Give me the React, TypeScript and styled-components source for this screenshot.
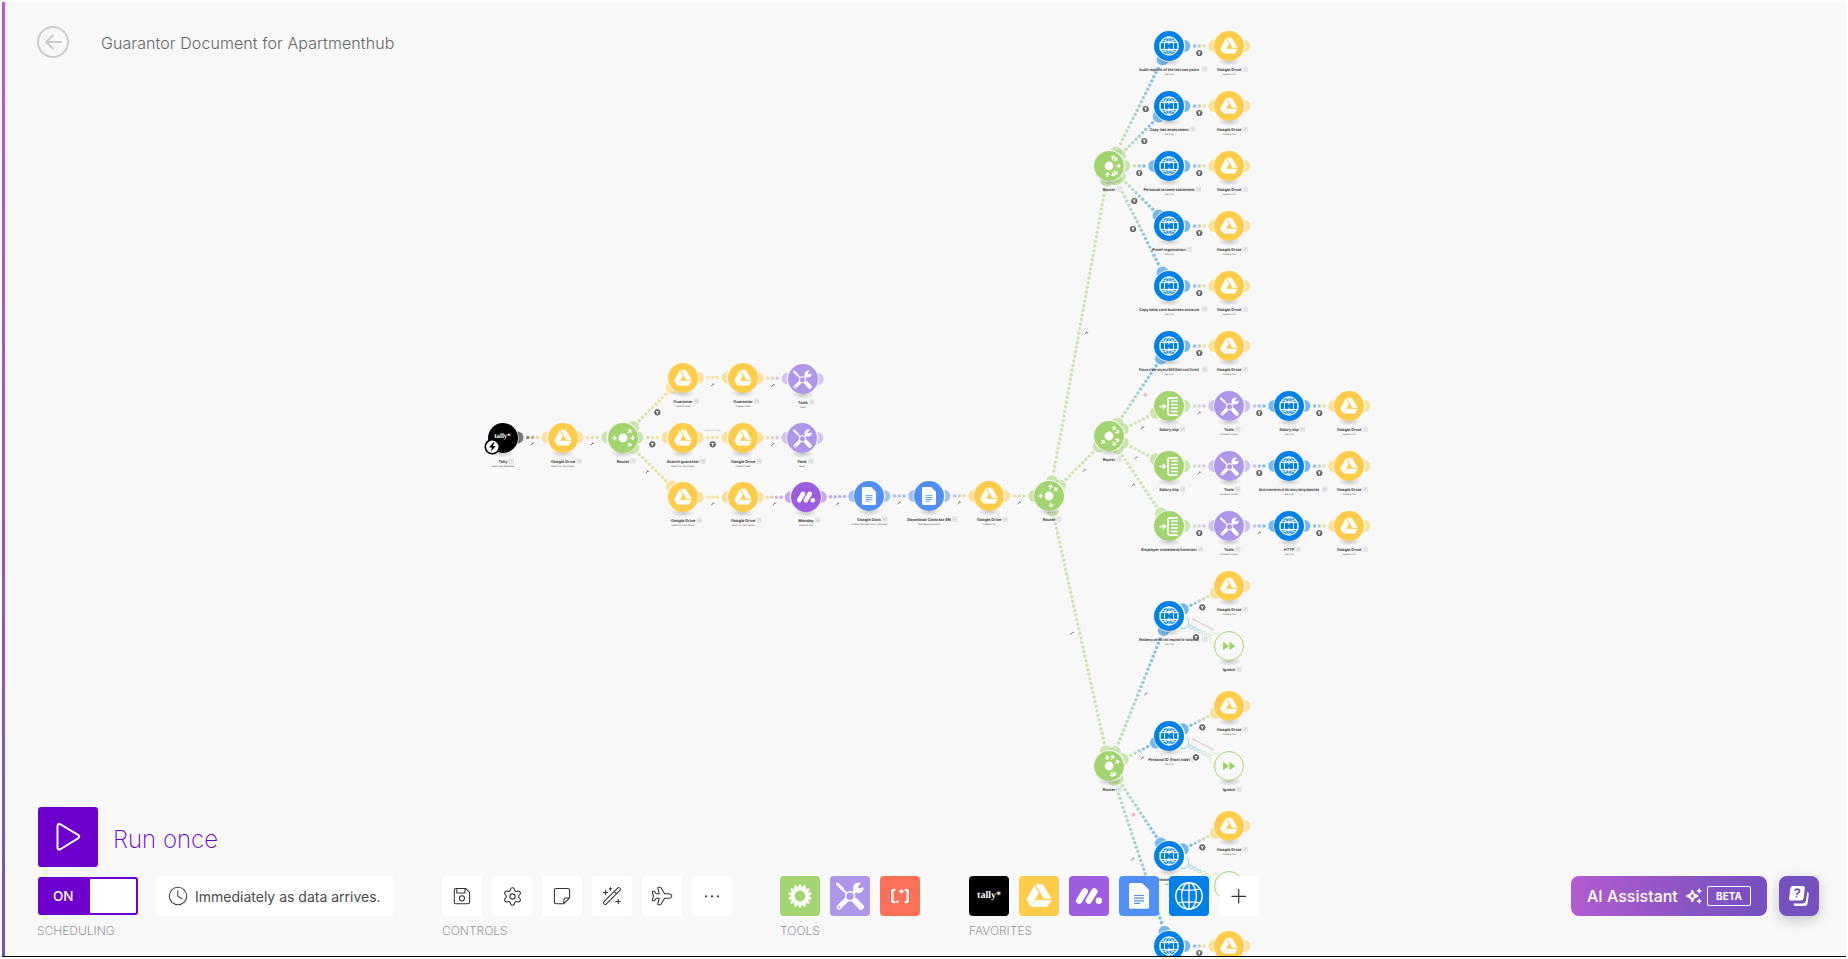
import React from "react";
import styled, { createGlobalStyle, css } from "styled-components";
import { Settings } from "lucide-react";

const GlobalStyle = createGlobalStyle`
  * { box-sizing: border-box; }
  body { margin: 0; background: #fff; font-family: Inter, "Liberation Sans", sans-serif; }
`;

/* ---------- palette ---------- */

type Kind = "tally" | "drive" | "router" | "tools" | "monday" | "docs" | "http" | "sheet" | "ignore";

const COLORS: Record<Kind, string> = {
  tally: "#000000",
  drive: "#ffcc4a",
  router: "#a2d56f",
  tools: "#ae96ea",
  monday: "#9c5de0",
  docs: "#508ff5",
  http: "#0080e8",
  sheet: "#a2d56f",
  ignore: "#a2d56f",
};

/* ---------- page frame ---------- */

const Screen = styled.main`
  display: grid;
  width: 1848px;
  height: 959px;
  overflow: hidden;
  background: #fff;
  & > * { grid-area: 1 / 1; min-width: 0; min-height: 0; }
`;

const Backdrop = styled.div`
  margin: 2px;
  background: linear-gradient(#b65cd0, #7550bf) left / 3px 100% no-repeat, #f8f8f8;
  border-bottom: 1px solid #000;
`;

const Canvas = styled.section`
  position: relative;
  height: 956px;
  overflow: hidden;
`;

const Overlay = styled.div`
  display: flex;
  flex-direction: column;
  justify-content: space-between;
  position: relative;
  padding: 26px 29px 20px 37px;
`;

/* ---------- header ---------- */

const Header = styled.header`
  display: flex;
  align-items: center;
  gap: 32px;
  height: 32px;
`;

const BackButton = styled.button`
  display: flex;
  width: 32px;
  height: 32px;
  padding: 0;
  border: 0;
  background: none;
`;

const Title = styled.h1`
  margin: 2px 0 0;
  font-size: 16px;
  font-weight: 300;
  letter-spacing: 0.08px;
  color: #666;
`;

/* ---------- bottom dock ---------- */

const Footer = styled.footer`
  display: flex;
  flex-direction: column;
`;

const RunRow = styled.div`
  display: flex;
  align-items: center;
  gap: 15px;
  height: 60px;
  margin: 0 0 9px 1px;
`;

const RunButton = styled.button`
  width: 60px;
  height: 60px;
  padding: 0;
  border: 0;
  border-radius: 3px;
  background: #6d00cc;
`;

const RunLabel = styled.span`
  padding-top: 5px;
  font-size: 24px;
  font-weight: 200;
  color: #6d00cc;
`;

const Dock = styled.div`
  display: flex;
  align-items: flex-start;
`;

const Group = styled.div<{ $width: number }>`
  flex: none;
  width: ${(p) => p.$width}px;
`;

const Tiles = styled.div<{ $gap?: number; $inset?: number }>`
  display: flex;
  align-items: center;
  gap: ${(p) => p.$gap ?? 10}px;
  padding-left: ${(p) => p.$inset ?? 0}px;
  height: 40px;
`;

const GroupLabel = styled.div`
  margin-top: 6px;
  height: 17px;
  line-height: 17px;
  font-size: 12px;
  font-weight: 300;
  color: #999;
`;

const Toggle = styled.button`
  display: flex;
  align-items: center;
  justify-content: space-between;
  width: 100px;
  height: 38px;
  padding: 2px 2px 2px 15px;
  border: 0;
  border-radius: 3px;
  background: #6d00cc;
  color: #fff;
  font: 500 13.5px Inter, sans-serif;
`;

const Knob = styled.span`
  width: 46px;
  height: 34px;
  border-radius: 1px;
  background: #fff;
`;

const Schedule = styled.div`
  display: flex;
  align-items: center;
  gap: 7px;
  width: 237px;
  height: 40px;
  padding-left: 12px;
  border-radius: 4px;
  background: #fff;
  color: #4a4a4a;
  font-size: 14px;
  white-space: nowrap;
`;

const Tile = styled.button<{ $color?: string }>`
  display: flex;
  flex: none;
  width: 40px;
  height: 40px;
  padding: 0;
  border: 0;
  border-radius: 4px;
  background: ${(p) => p.$color ?? "#fff"};
`;

const Assist = styled.div`
  display: flex;
  gap: 12px;
  margin-left: auto;
`;

const AssistantButton = styled.button`
  display: flex;
  align-items: center;
  width: 196px;
  height: 40px;
  padding: 0 0 0 16px;
  border: 0;
  border-radius: 8px;
  background: linear-gradient(100deg, #b25ccf, #7550bf 95%);
  color: #fff;
  font: 500 16px Inter, sans-serif;
  text-align: left;
  white-space: nowrap;
`;

const AssistantText = styled.span`
  width: 97px;
`;

const Beta = styled.span`
  display: flex;
  align-items: center;
  justify-content: center;
  width: 44px;
  height: 20px;
  margin-left: 3px;
  border: 1px solid #fff;
  border-radius: 2px;
  font-size: 10px;
  font-weight: 700;
`;

const HelpButton = styled.button`
  width: 40px;
  height: 40px;
  padding: 0;
  border: 0;
  border-radius: 8px;
  background: #7550bf;
  box-shadow: 0 4px 14px rgba(0, 0, 0, 0.2);
`;

/* ---------- diagram parts ---------- */

const Wires = styled.svg`
  position: absolute;
  inset: 0;
`;

const NodeBox = styled.div<{ $x: number; $y: number }>`
  position: absolute;
  left: ${(p) => p.$x - 40}px;
  top: ${(p) => p.$y - 15}px;
  width: 80px;
  display: flex;
  flex-direction: column;
  align-items: center;
`;

const Disc = styled.div<{ $kind: Kind }>`
  display: flex;
  align-items: center;
  justify-content: center;
  width: 30px;
  height: 30px;
  border-radius: 50%;
  background: ${(p) => COLORS[p.$kind]};
  ${(p) =>
    p.$kind === "ignore" &&
    css`
      background: #f8f8f8;
      border: 1px solid #a2d56f;
    `}
`;

const Caption = styled.svg`
  display: block;
  overflow: visible;
  font-family: Inter, sans-serif;
  text-rendering: geometricPrecision;
`;

/* ---------- icons (40 unit grid) ---------- */

const Icon = ({ size = 40, children }: { size?: number; children: React.ReactNode }) => (
  <svg width={size} height={size} viewBox="0 0 40 40" fill="none">
    {children}
  </svg>
);

const DriveMark = ({ size }: { size?: number }) => (
  <Icon size={size}>
    <g fill="#fff" stroke="#fff" strokeWidth=".7" strokeLinejoin="round">
      <path d="M15.4 9.6 19.5 17 11.8 30.2 7.9 23.6Z" />
      <path d="M17 8.6H23.7L31.8 22.2H24.7Z" />
      <path d="M16.5 24.3H31.9L28.3 30.5H12.9Z" />
    </g>
  </Icon>
);

const MondayMark = ({ size }: { size?: number }) => (
  <Icon size={size}>
    <path d="M10.2 24.6 15.8 15.4M19.8 24.6 25.4 15.4" stroke="#fff" strokeWidth="6.4" strokeLinecap="round" />
    <circle cx="29.8" cy="24.7" r="3.2" fill="#fff" />
  </Icon>
);

const DocsMark = ({ size }: { size?: number }) => (
  <Icon size={size}>
    <path d="M11.5 7H23L30 14V31.2Q30 32.7 28.5 32.7H11.5Q10 32.7 10 31.2V8.5Q10 7 11.5 7Z" fill="#fff" />
    <path d="M15 19.5H25M15 22.2H25M15 24.9H25M15 27.4H21" stroke="#508ff5" strokeWidth="1.2" />
  </Icon>
);

const GlobeMark = ({ size, compact }: { size?: number; compact?: boolean }) => (
  <Icon size={size}>
    {compact ? (
      <g stroke="#fff" strokeWidth="1.6">
        <circle cx="20" cy="20" r="13" />
        <path d="M20 7V14.5M20 25.5V33M14 14.5Q15.5 9.5 20 7.4 24.5 9.5 26 14.5M14 25.5Q15.5 30.5 20 32.6 24.5 30.5 26 25.5M10.5 12.2Q20 15 29.5 12.2M10.5 27.8Q20 25 29.5 27.8" strokeWidth="1.3" />
        <rect x="7.4" y="15" width="25.2" height="10" fill="#0080e8" strokeWidth="1.6" />
        <path d="M13.6 15V25M20 15V17.8M20 22.2V25M26.4 15V25" strokeWidth="1.5" />
      </g>
    ) : (
      <g stroke="#fff" strokeWidth="1.3">
        <circle cx="20" cy="20" r="13.2" strokeWidth="1.5" />
        <ellipse cx="20" cy="20" rx="7.4" ry="13.2" />
        <path d="M20 6.8V33.2M8.8 13.2Q20 15.4 31.2 13.2M8.8 26.8Q20 24.8 31.2 26.8" />
      </g>
    )}
  </Icon>
);

const ToolsMark = ({ size }: { size?: number }) => (
  <Icon size={size}>
    <g stroke="#fff" strokeLinecap="round">
      <path d="M7.3 8.3 16 16.6" strokeWidth="1.8" />
      <path d="M7.4 8 12.5 13" strokeWidth="2.8" />
      <path d="M25.3 25 30.8 30.8" strokeWidth="6" />
      <path d="M9.2 31 15.8 24.4" strokeWidth="5" />
      <path d="M23.7 16.3 27 13" strokeWidth="3.6" strokeLinecap="butt" />
      <path d="M29.8 7.4A4.6 4.6 0 1 0 33 11.9L29.3 13.2 26.6 10.8Z" fill="#fff" strokeWidth="1.4" strokeLinejoin="round" />
    </g>
    <circle cx="20" cy="20.3" r="4.5" stroke="#fff" strokeWidth="1.6" fill="#ae96ea" />
    <circle cx="9.4" cy="31" r="1.1" fill="#ae96ea" />
  </Icon>
);

const GearMark = () => (
  <Icon>
    <circle cx="20" cy="20" r="7.4" stroke="#fff" strokeWidth="4" />
    {Array.from({ length: 14 }, (_, i) => (
      <path
        key={i}
        d="M18.3 11.5 19 8.3H21L21.7 11.5Z"
        fill="#fff"
        transform={`rotate(${(i * 360) / 14} 20 20)`}
      />
    ))}
  </Icon>
);

const ParserMark = () => (
  <Icon>
    <path d="M15.4 13.9H14Q12.3 13.9 12.3 15.6V24.6Q12.3 26.2 14 26.2H15.4M24.6 13.9H26Q27.7 13.9 27.7 15.6V24.6Q27.7 26.2 26 26.2H24.6" stroke="#fff" strokeWidth="2.3" />
    <circle cx="17.5" cy="25.8" r="1.3" fill="#fff" />
    <path d="M21.5 13.2V17.4M19.5 14.7 23.5 15.9M23.5 14.7 19.5 15.9" stroke="#fff" strokeWidth="1.2" />
  </Icon>
);

const TallyText = styled.span<{ $size: number }>`
  margin: auto;
  color: #fff;
  font: 700 ${(p) => p.$size}px "Liberation Serif", serif;
  line-height: 1;
  text-rendering: geometricPrecision;
`;

const SheetMark = ({ size }: { size?: number }) => (
  <Icon size={size}>
    <path d="M6 20H14M10.8 16.4 14.6 20 10.8 23.6" stroke="#fff" strokeWidth="1.8" />
    <path d="M31.5 8H21Q18 8 18 11V29Q18 32 21 32H31.5" stroke="#fff" strokeWidth="2.4" />
    <path d="M22 12.5H31.5M22 17.2H31.5M22 22H31.5M22 26.8H31.5" stroke="#fff" strokeWidth="2" />
  </Icon>
);

const IgnoreMark = () => (
  <Icon size={28}>
    <path d="M11.5 14 20 20 11.5 26ZM20.5 14 29 20 20.5 26Z" fill="#9bd063" />
  </Icon>
);

const RouterMark = ({ arrows }: { arrows: [number, boolean][] }) => (
  <svg width="30" height="30" viewBox="-15 -15 30 30">
    <circle r="4.4" fill="#fff" />
    {arrows.map(([angle, inward], i) => (
      <g key={i} transform={`rotate(${angle}) translate(9 0) scale(${inward ? -1 : 1} 1)`}>
        <path d="M-2.3 0H1.8M0 -2 2 0 0 2" fill="none" stroke="#fff" strokeWidth="1.2" />
      </g>
    ))}
  </svg>
);

const line = { stroke: "#333", strokeWidth: 1.05, strokeLinecap: "round", strokeLinejoin: "round" } as const;

const SaveIcon = () => (
  <Icon>
    <path {...line} d="M13.8 12.4H23.6L27.6 16.4V26.2Q27.6 27.7 26.1 27.7H13.8Q12.3 27.7 12.3 26.2V13.9Q12.3 12.4 13.8 12.4ZM14.8 12.6V16.9H23V12.6" />
    <circle {...line} cx="19.9" cy="22.3" r="2.6" />
  </Icon>
);

const NoteIcon = () => (
  <Icon>
    <path {...line} d="M13.9 12.4H26.1Q27.6 12.4 27.6 13.9V21.9L21.9 27.7H13.9Q12.4 27.7 12.4 26.2V13.9Q12.4 12.4 13.9 12.4ZM27.4 21.9H23.4Q21.9 21.9 21.9 23.4V27.5" />
  </Icon>
);

const WandIcon = () => (
  <Icon>
    <path {...line} d="M11.8 25.9 25.9 11.8Q26.7 11.1 27.5 11.8L28.2 12.5Q28.9 13.3 28.2 14.1L14.1 28.2Q13.3 28.9 12.5 28.2L11.8 27.5Q11.1 26.7 11.8 25.9ZM22.2 15.5 24.5 17.8M13.6 14.3V18.7M11.4 16.5H15.8M18.4 11.6V14M17.2 12.8H19.6M26.2 23.2V27.6M24 25.4H28.4" />
  </Icon>
);

const PlaneIcon = () => (
  <Icon>
    <path {...line} d="M29.8 20C29.8 18.6 27.5 17.7 25.8 17.7H22.6L19 11.7Q18.7 11.3 18.2 11.3H16.3Q15.6 11.3 15.8 12L17.2 17.7H14.2L12.6 15.6Q12.4 15.3 12 15.3H10.7Q10.1 15.3 10.3 15.9L11.5 20 10.3 24.1Q10.1 24.7 10.7 24.7H12Q12.4 24.7 12.6 24.4L14.2 22.3H17.2L15.8 28Q15.6 28.7 16.3 28.7H18.2Q18.7 28.7 19 28.3L22.6 22.3H25.8C27.5 22.3 29.8 21.4 29.8 20Z" />
  </Icon>
);

const MoreIcon = () => (
  <Icon>
    {[14, 20, 26].map((x) => (
      <circle key={x} cx={x} cy="20.3" r="1.1" fill="#333" />
    ))}
  </Icon>
);

const CenteredSettings = styled(Settings)`
  margin: auto;
  color: #333;
`;

/* ---------- scenario data ---------- */

interface FlowNode {
  id: string;
  kind: Kind;
  x: number;
  y: number;
  name: string;
  /** drawn width of the name in pixels */
  w: number;
  sub?: string;
  n?: number;
  tail?: boolean;
}

const UP = "Upload a File";
const GET = "Get a file";
const FIND = "Search for Files/Folders";

const nodes: FlowNode[] = [
  { id: "tally", kind: "tally", x: 502.5, y: 437.5, name: "Tally", w: 9, sub: "Watch New Responses", n: 1 },
  { id: "d0", kind: "drive", x: 562.5, y: 437.5, name: "Google Drive", w: 24.7, sub: FIND, n: 26 },
  { id: "r0", kind: "router", x: 622.5, y: 437.5, name: "Router", w: 12.5, n: 31 },
  { id: "g1", kind: "drive", x: 682.5, y: 377.5, name: "Guarantor", w: 19.3, sub: "Create a Folder", n: 32 },
  { id: "g2", kind: "drive", x: 742.5, y: 377.5, name: "Guarantor", w: 19.3, sub: "Create a Folder", n: 33 },
  { id: "t1", kind: "tools", x: 802.7, y: 379, name: "Tools", w: 9.8, sub: "Sleep", n: 38, tail: true },
  { id: "s1", kind: "drive", x: 682.5, y: 437.5, name: "Search guarantor", w: 32.3, sub: FIND, n: 34 },
  { id: "s2", kind: "drive", x: 742.5, y: 437.5, name: "Google Drive", w: 24.7, sub: "Create a Folder", n: 35 },
  { id: "t2", kind: "tools", x: 802.3, y: 438, name: "Tools", w: 9.8, sub: "Sleep", n: 39, tail: true },
  { id: "l1", kind: "drive", x: 682.5, y: 497.3, name: "Google Drive", w: 24.7, sub: FIND, n: 36 },
  { id: "l2", kind: "drive", x: 742.5, y: 497.3, name: "Google Drive", w: 24.7, sub: FIND, n: 37 },
  { id: "mon", kind: "monday", x: 805.8, y: 497.3, name: "Monday", w: 15.4, sub: "Create an Item", n: 24 },
  { id: "doc1", kind: "docs", x: 869.3, y: 496, name: "Google Docs", w: 24, sub: "Create a Document from a Template", n: 40 },
  { id: "doc2", kind: "docs", x: 929.3, y: 496, name: "Download Contract EN", w: 43.7, sub: "Download a Document", n: 41 },
  { id: "l3", kind: "drive", x: 989.3, y: 496, name: "Google Drive", w: 24.7, sub: UP, n: 42 },
  { id: "rm", kind: "router", x: 1049.3, y: 496, name: "Router", w: 12.5, n: 7 },
  { id: "ra", kind: "router", x: 1109.3, y: 166, name: "Router", w: 12.5, n: 8 },
  { id: "rb", kind: "router", x: 1109.3, y: 436, name: "Router", w: 12.5, n: 9 },
  { id: "rc", kind: "router", x: 1109.3, y: 766, name: "Router", w: 12.5, n: 10 },
];

type Link = [string, string];

const links: Link[] = [
  ["tally", "d0"], ["d0", "r0"], ["r0", "g1"], ["g1", "g2"], ["g2", "t1"],
  ["r0", "s1"], ["s1", "s2"], ["s2", "t2"], ["r0", "l1"], ["l1", "l2"], ["l2", "mon"],
  ["mon", "doc1"], ["doc1", "doc2"], ["doc2", "l3"], ["l3", "rm"],
  ["rm", "ra"], ["rm", "rb"], ["rm", "rc"],
];

const drive = (id: string, x: number, y: number) =>
  nodes.push({ id, kind: "drive", x, y, name: "Google Drive", w: 24.7, sub: UP, n: 12, tail: true });

const requests: [string, number, number, string][] = [
  ["Audit reports of the last two years", 46, 60, "ra"],
  ["Copy last assessment", 106, 39, "ra"],
  ["Personal income statement", 166, 51, "ra"],
  ["Proof registration", 226, 33.3, "ra"],
  ["Copy bank card business account", 286, 60, "ra"],
  ["Picture of pre-physical BKR/Debit card (fronts)", 346, 60, "rb"],
  ["HTTP", 946, 10.3, "rc"],
];
requests.forEach(([name, y, w, router], i) => {
  nodes.push({ id: `h${i}`, kind: "http", x: 1169.3, y, name, sub: GET, n: 14 + i, w });
  drive(`hd${i}`, 1229.3, y);
  links.push([router, `h${i}`], [`h${i}`, `hd${i}`]);
});

const slips: [string, number, string, number, number][] = [
  ["Salary slip", 19.5, "Salary slip", 19.5, 406],
  ["Salary slip", 19.5, "Bank statements of the salary being deposited", 60, 466],
  ["Employer statement/contract", 55.5, "HTTP", 10.3, 526],
];
slips.forEach(([first, w1, second, w2, y], i) => {
  nodes.push({ id: `p${i}`, kind: "sheet", x: 1169.3, y, name: first, w: w1, n: 43 + i });
  nodes.push({ id: `pt${i}`, kind: "tools", x: 1229.3, y, name: "Tools", w: 9.8, sub: "Increment function", n: 53 });
  nodes.push({ id: `ph${i}`, kind: "http", x: 1289.3, y, name: second, w: w2, sub: GET, n: 63 });
  drive(`pd${i}`, 1349.3, y);
  links.push(["rb", `p${i}`], [`p${i}`, `pt${i}`], [`pt${i}`, `ph${i}`], [`ph${i}`, `pd${i}`]);
});

const permits: [string, number, number][] = [
  ["Residency permit (not required for nationals)", 616, 60],
  ["Personal ID (front side)", 736, 41.7],
  ["Automated request", 856, 37],
];
permits.forEach(([name, y, w], i) => {
  nodes.push({ id: `q${i}`, kind: "http", x: 1169.3, y, name, sub: GET, n: 71 + i, w });
  drive(`qd${i}`, 1229.3, y - 30);
  nodes.push({ id: `qi${i}`, kind: "ignore", x: 1229.3, y: y + 30, name: "Ignore", w: 12.5, n: 81 });
  links.push(["rc", `q${i}`], [`q${i}`, `qd${i}`], [`q${i}`, `qi${i}`]);
});

const byId = Object.fromEntries(nodes.map((n) => [n.id, n]));

const funnels: [number, number][] = [
  [657.3, 412.3], [652.3, 444.3], [712.7, 444.3],
  [1199.3, 53], [1199.3, 113], [1199.3, 173], [1199.3, 233], [1199.3, 293], [1199.3, 353],
  [1145.7, 109], [1144.3, 141], [1139.3, 173], [1134.3, 201], [1133, 229],
  [1199.3, 533], [1259.3, 413], [1259.3, 473], [1319.3, 413], [1319.3, 473], [1319.3, 533],
  [1202.3, 607.3], [1196, 637.3], [1202.3, 727.3], [1196, 757.3], [1202.3, 847.3], [1199.3, 953],
];

const wrenches: [number, number][] = [
  [712.7, 384.7], [772.7, 385.3], [532.3, 443.7], [592.3, 443.7], [772.7, 444.3], [647.3, 471.7],
  [712.7, 503.7], [774.3, 503.7], [837.7, 503.7], [899.3, 502.7], [959.3, 502.7], [1019.3, 502.7],
  [1086.3, 332.7], [1142.3, 427.7], [1136, 457.7], [1133.3, 484.7], [1084.3, 470.3],
  [1199.3, 412.8], [1199.3, 472.7], [1259.3, 532.8], [1146, 693.7], [1142.3, 757.7], [1132.7, 859],
  [1072, 633],
];

const disabled: [number, number][] = [[1145.3, 394.7], [1133.3, 814.7]];

/* ---------- wiring ---------- */

const mix = (a: string, b: string, t: number) => {
  const channel = (hex: string, i: number) => parseInt(hex.slice(1 + i * 2, 3 + i * 2), 16);
  return `rgb(${[0, 1, 2].map((i) => Math.round(channel(a, i) * (1 - t) + channel(b, i) * t)).join(",")})`;
};

const STEP = 4.67;

const Wire = ({ from, to }: { from: FlowNode; to: FlowNode }) => {
  const dx = to.x - from.x;
  const dy = to.y - from.y;
  const d = Math.hypot(dx, dy);
  const ux = dx / d;
  const uy = dy / d;
  const count = Math.floor((d - 47) / STEP) + 1;
  const start = (d - (count - 1) * STEP) / 2;
  const hollow = to.kind === "ignore";
  const a = COLORS[from.kind];
  const b = COLORS[to.kind];
  const paint = (c: string) =>
    hollow ? { fill: "#f8f8f8", stroke: c, strokeWidth: 0.7 } : { fill: c };
  return (
    <g opacity={0.52}>
      <circle cx={from.x + ux * 15} cy={from.y + uy * 15} r={6} {...paint(a)} />
      <circle cx={to.x - ux * 15} cy={to.y - uy * 15} r={6} {...paint(b)} />
      {Array.from({ length: count }, (_, i) => {
        const s = start + i * STEP;
        const t = count > 1 ? 0.1 + (0.8 * i) / (count - 1) : 0.5;
        return <circle key={i} cx={from.x + ux * s} cy={from.y + uy * s} r={1.7} {...paint(mix(a, b, t))} />;
      })}
    </g>
  );
};

const Wiring = () => (
  <Wires width="1848" height="956" viewBox="0 0 1848 956">
    <defs>
      <radialGradient id="shade">
        <stop offset="0" stopColor="#000" stopOpacity=".2" />
        <stop offset="1" stopColor="#000" stopOpacity="0" />
      </radialGradient>
    </defs>
    {nodes.filter((n) => n.tail).map((n) => (
      <circle key={n.id} cx={n.x + 15} cy={n.y} r="6" fill={COLORS[n.kind]} opacity=".52" />
    ))}
    {links.map(([a, b]) => (
      <Wire key={a + b} from={byId[a]} to={byId[b]} />
    ))}
    {nodes.map((n) => (
      <circle key={n.id} cx={n.x} cy={n.y} r="16" fill="#f8f8f8" />
    ))}
    {nodes.map((n) => (
      <ellipse key={n.id} cx={n.x} cy={n.y + 15.5} rx="12" ry="4.5" fill="url(#shade)" />
    ))}
  </Wires>
);

const Marks = () => (
  <Wires width="1848" height="956" viewBox="0 0 1848 956">
    {funnels.map(([x, y]) => (
      <g key={`${x}-${y}`} transform={`translate(${x} ${y})`}>
        <circle r="3.1" fill="#666" />
        <path d="M-1.6 -1.4H1.6L.5 .2V1.5L-.5 1.9V.2Z" fill="#fff" />
      </g>
    ))}
    {wrenches.map(([x, y]) => (
      <path
        key={`${x}-${y}`}
        transform={`translate(${x} ${y})`}
        d="M-1.6 1.6 .6 -.6M.2 -1.2 1 -.2 1.7 -.9"
        fill="none"
        stroke="#666"
        strokeWidth=".9"
      />
    ))}
    {disabled.map(([x, y]) => (
      <g key={x} transform={`translate(${x} ${y})`} stroke="#f08a94" strokeWidth=".8" fill="none">
        <circle r="1.4" />
        <path d="M-1 -1 1 1" />
      </g>
    ))}
    <g transform="translate(492.3 446.8)">
      <circle r="7" fill="#fff" stroke="#000" strokeWidth="1.6" />
      <path d="M1.2 -4.6 -3.2 .6H-.3L-1.4 4.6 3.4 -.8H.5L2.2 -4.6Z" fill="#000" />
    </g>
    <g fontFamily="Inter, sans-serif" fontSize="1.9" fill="#777" textAnchor="middle" textRendering="geometricPrecision">
      <text x="712.7" y="430.8">Search if it is full</text>
      {[624, 744].map((y) => (
        <text key={y} transform={`translate(1202.7 ${y + 1}) rotate(28)`}>
          File is not uploaded/empty
        </text>
      ))}
    </g>
  </Wires>
);

const routerArrows = (router: FlowNode): [number, boolean][] =>
  links
    .filter(([a, b]) => a === router.id || b === router.id)
    .map(([a, b]) => {
      const inward = b === router.id;
      const other = byId[inward ? a : b];
      return [(Math.atan2(other.y - router.y, other.x - router.x) * 180) / Math.PI, inward];
    });

const NodeMark = ({ node }: { node: FlowNode }) => {
  switch (node.kind) {
    case "tally":
      return <TallyText $size={6.9}>tally*</TallyText>;
    case "drive":
      return <DriveMark size={28} />;
    case "router":
      return <RouterMark arrows={routerArrows(node)} />;
    case "tools":
      return <ToolsMark size={27} />;
    case "monday":
      return <MondayMark size={28} />;
    case "docs":
      return <DocsMark size={28} />;
    case "http":
      return <GlobeMark size={28} compact />;
    case "sheet":
      return <SheetMark size={29} />;
    default:
      return <IgnoreMark />;
  }
};

const NodeCaption = ({ node }: { node: FlowNode }) => {
  const half = node.w / 2;
  const badge = half + (node.w >= 60 ? 3.6 : 1.6);
  return (
    <Caption width="80" height="16" viewBox="-40 0 80 16">
      <text
        x={-half}
        y="9.7"
        fontSize="3.9"
        fontWeight="700"
        fill="#3c3c3c"
        textLength={node.w}
        lengthAdjust="spacingAndGlyphs"
      >
        {node.name}
      </text>
      <rect x={badge} y="5.9" width="4.4" height="4.4" rx=".4" fill="#f0f0f0" stroke="#ccc" strokeWidth=".5" />
      <text x={badge + 2.2} y="8.9" fontSize="2" fill="#999" textAnchor="middle">
        {node.n}
      </text>
      {node.sub && (
        <text x="0" y="13.8" fontSize="2.1" fill="#555" textAnchor="middle">
          {node.sub}
        </text>
      )}
    </Caption>
  );
};

const Module = ({ node }: { node: FlowNode }) => (
  <NodeBox $x={node.x} $y={node.y}>
    <Disc $kind={node.kind}>
      <NodeMark node={node} />
    </Disc>
    {node.y < 930 && <NodeCaption node={node} />}
  </NodeBox>
);

/* ---------- app ---------- */

export default function App() {
  return (
    <>
      <GlobalStyle />
      <Screen>
        <Backdrop />
        <Canvas>
          <Wiring />
          {nodes.map((n) => (
            <Module key={n.id} node={n} />
          ))}
          <Marks />
        </Canvas>
        <Overlay>
          <Header>
            <BackButton aria-label="Back">
              <svg width="32" height="32" viewBox="0 0 32 32" fill="none" stroke="#ccc" strokeWidth="2">
                <circle cx="16" cy="16" r="15" />
                <path d="M24 16H9M15.8 9.5 9 16 15.8 22.5" strokeLinecap="round" strokeLinejoin="round" />
              </svg>
            </BackButton>
            <Title>Guarantor Document for Apartmenthub</Title>
          </Header>
          <Footer>
            <RunRow>
              <RunButton aria-label="Run once">
                <svg width="60" height="60" viewBox="0 0 60 60" fill="none">
                  <path d="M19.5 19.4Q19.5 15.8 22.8 17.5L40 27.8Q42.6 29.6 40 31.4L22.8 42Q19.5 43.7 19.5 40.2Z" stroke="#fff" strokeWidth="2" />
                </svg>
              </RunButton>
              <RunLabel>Run once</RunLabel>
            </RunRow>
            <Dock>
              <Group $width={405}>
                <Tiles $gap={18} $inset={1}>
                  <Toggle>
                    ON
                    <Knob />
                  </Toggle>
                  <Schedule>
                    <svg width="20" height="20" viewBox="0 0 20 20" fill="none" stroke="#444" strokeWidth="1.1">
                      <circle cx="10" cy="10" r="8.7" />
                      <path d="M9.8 4.6V10.2L14 12.8" />
                    </svg>
                    Immediately as data arrives.
                  </Schedule>
                </Tiles>
                <GroupLabel>SCHEDULING</GroupLabel>
              </Group>
              <Group $width={338}>
                <Tiles>
                  <Tile><SaveIcon /></Tile>
                  <Tile><CenteredSettings size={21} strokeWidth={1.2} /></Tile>
                  <Tile><NoteIcon /></Tile>
                  <Tile><WandIcon /></Tile>
                  <Tile><PlaneIcon /></Tile>
                  <Tile><MoreIcon /></Tile>
                </Tiles>
                <GroupLabel>CONTROLS</GroupLabel>
              </Group>
              <Group $width={189}>
                <Tiles>
                  <Tile $color={COLORS.router}><GearMark /></Tile>
                  <Tile $color={COLORS.tools}><ToolsMark /></Tile>
                  <Tile $color="#fc7059"><ParserMark /></Tile>
                </Tiles>
                <GroupLabel>TOOLS</GroupLabel>
              </Group>
              <Group $width={290}>
                <Tiles>
                  <Tile $color={COLORS.tally}><TallyText $size={10}>tally*</TallyText></Tile>
                  <Tile $color={COLORS.drive}><DriveMark /></Tile>
                  <Tile $color={COLORS.monday}><MondayMark /></Tile>
                  <Tile $color={COLORS.docs}><DocsMark /></Tile>
                  <Tile $color={COLORS.http}><GlobeMark /></Tile>
                  <Tile>
                    <Icon>
                      <path d="M12.5 20.3H27M19.7 13V27.5" stroke="#333" strokeWidth="1.2" />
                    </Icon>
                  </Tile>
                </Tiles>
                <GroupLabel>FAVORITES</GroupLabel>
              </Group>
              <Assist>
                <AssistantButton>
                  <AssistantText>AI Assistant</AssistantText>
                  <svg width="20" height="20" viewBox="0 0 20 20" fill="none">
                    <path d="M8.3 4.8 9.8 8.5 13.5 10 9.8 11.5 8.3 15.2 6.8 11.5 3.1 10 6.8 8.5Z" stroke="#fff" strokeWidth="1.9" strokeLinejoin="round" />
                    <path d="M15.2 1.8 16.1 4 18.3 4.9 16.1 5.8 15.2 8 14.3 5.8 12.1 4.9 14.3 4ZM15.2 12 16.1 14.2 18.3 15.1 16.1 16 15.2 18.2 14.3 16 12.1 15.1 14.3 14.2Z" fill="#fff" />
                  </svg>
                  <Beta>BETA</Beta>
                </AssistantButton>
                <HelpButton aria-label="Help">
                  <Icon>
                    <path d="M13.8 10H23.6Q26.2 10 25.8 12.6L24.6 22.2Q24.2 24.6 21.8 24.6H12.2Q9.8 24.6 10.2 22L11.4 12.2Q11.8 10 13.8 10Z" fill="#fff" />
                    <path d="M28.4 15.8Q30 16.4 29.8 18.4L28.6 27.4Q28.2 30 25.6 30H17Q14.6 30 14.6 27.4H23.6Q26.4 27.4 26.9 24.6Z" fill="#fff" />
                    <path d="M15.8 14.9Q16.4 13.2 18.4 13.2 20.8 13.4 20.4 15.6 20 17 18.2 17.6L17.9 18.9M17.6 20.3 17.5 21.5" stroke="#7550bf" strokeWidth="1.8" />
                  </Icon>
                </HelpButton>
              </Assist>
            </Dock>
          </Footer>
        </Overlay>
      </Screen>
    </>
  );
}
